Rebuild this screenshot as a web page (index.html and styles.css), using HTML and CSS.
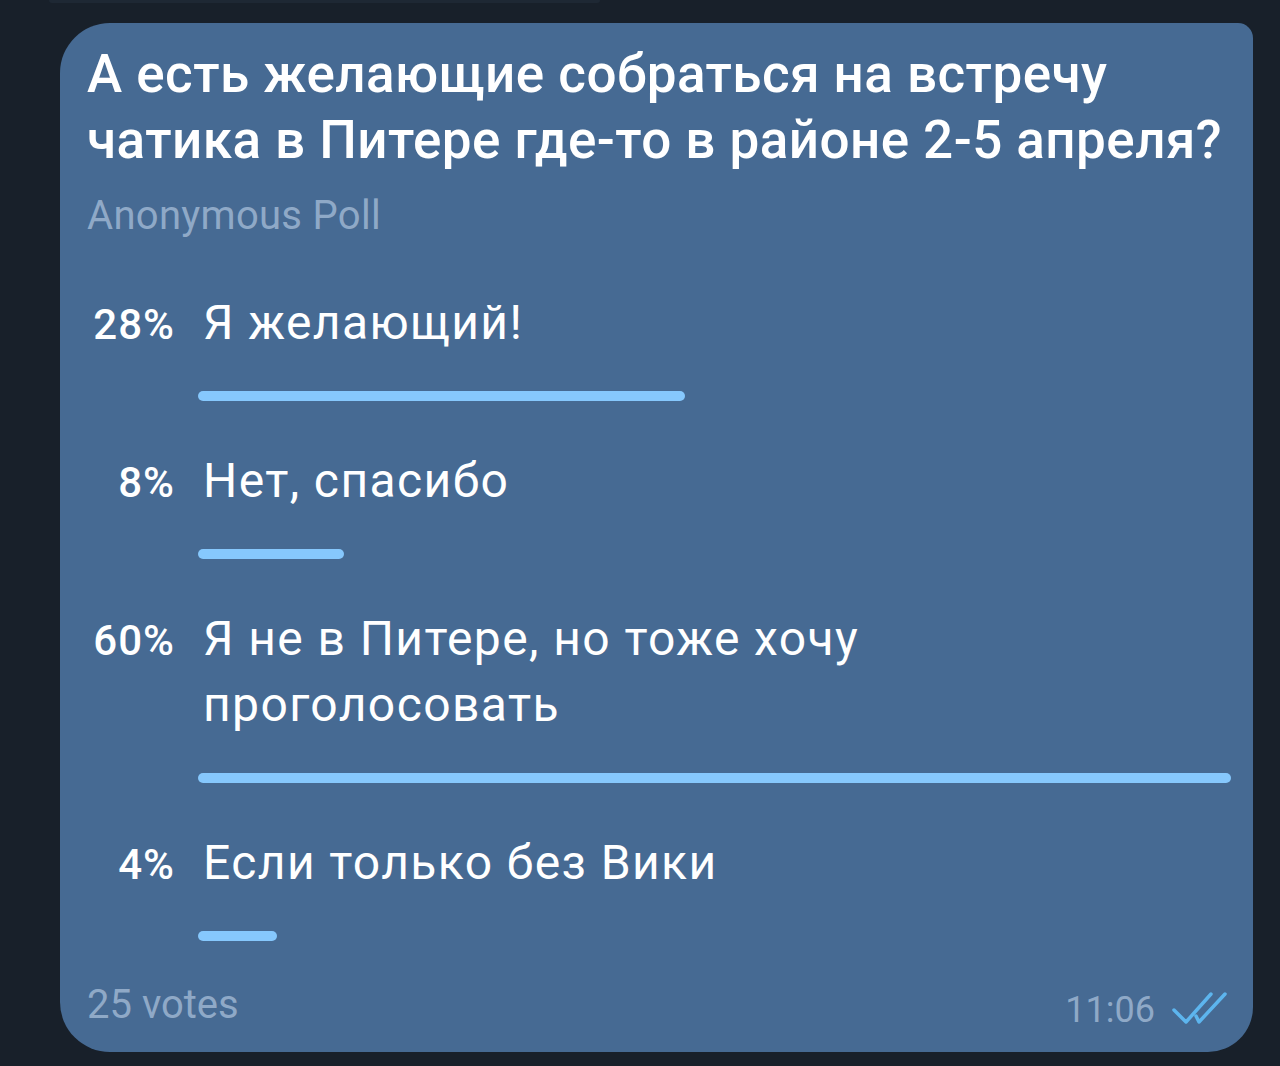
FILE: index.html
```html
<!DOCTYPE html>
<html lang="ru">
<head>
  <meta charset="UTF-8">
  <title>Опрос</title>
  <link rel="stylesheet" href="styles.css">
</head>
<body>

  <div class="prev-msg"></div>

  <div class="bubble">
    <div class="question">А есть желающие собраться на встречу чатика в Питере где-то в районе 2-5 апреля?</div>
    <div class="poll-type">Anonymous Poll</div>

    <div class="answers">
      <div class="answer">
        <div class="pct">28%</div>
        <div class="body">
          <div class="label">Я желающий!</div>
          <div class="bar" style="width: 47.1%"></div>
        </div>
      </div>
      <div class="answer">
        <div class="pct">8%</div>
        <div class="body">
          <div class="label">Нет, спасибо</div>
          <div class="bar" style="width: 14.1%"></div>
        </div>
      </div>
      <div class="answer">
        <div class="pct">60%</div>
        <div class="body">
          <div class="label">Я не в Питере, но тоже хочу проголосовать</div>
          <div class="bar" style="width: 100%"></div>
        </div>
      </div>
      <div class="answer">
        <div class="pct">4%</div>
        <div class="body">
          <div class="label">Если только без Вики</div>
          <div class="bar" style="width: 7.6%"></div>
        </div>
      </div>
    </div>

    <div class="footer">
      <div class="votes">25 votes</div>
      <div class="meta">
        <span class="time">11:06</span>
        <svg class="ticks" width="56" height="32" viewBox="0 0 56 32">
          <path d="M2 18 L14 30 L39 2" />
          <path d="M24 24 L27 30 L53 2" />
        </svg>
      </div>
    </div>
  </div>

</body>
</html>
```

FILE: styles.css
```css
html, body {
  margin: 0;
  padding: 0;
  background: #18202a;
  font-family: Roboto, "Noto Sans", sans-serif;
  color: #fff;
}

.prev-msg {
  width: 551px;
  height: 3px;
  margin-left: 49px;
  background: #1e2834;
  border-radius: 0 0 14px 14px;
}

.bubble {
  width: 1193px;
  height: 1029px;
  box-sizing: border-box;
  margin: 20px 0 0 60px;
  padding: 18px 22px 22px 27px;
  background: #466a93;
  border-radius: 50px 15px 45px 50px;
  display: flex;
  flex-direction: column;
}

.question {
  font-size: 53px;
  font-weight: 500;
  line-height: 66px;
  letter-spacing: 0.45px;
}

.poll-type {
  margin-top: 18px;
  font-size: 40px;
  line-height: 50px;
  letter-spacing: 0.3px;
  color: #8fa9c7;
}

.answers {
  margin-top: 49px;
  display: flex;
  flex-direction: column;
  gap: 47px;
}

.answer {
  display: grid;
  grid-template-columns: 87px 1fr;
  column-gap: 24px;
  align-items: baseline;
}

.pct {
  text-align: right;
  font-size: 42px;
  font-weight: 500;
  line-height: 66px;
  letter-spacing: 1px;
  margin-right: -1px;
}

.label {
  padding: 0 60px 0 5px;
  font-size: 48px;
  line-height: 66px;
  letter-spacing: 1.4px;
}

.bar {
  margin-top: 35px;
  height: 10px;
  border-radius: 5px;
  background: #86c8fd;
}

.footer {
  margin-top: auto;
  display: flex;
  justify-content: space-between;
  align-items: flex-end;
  color: #8fa9c7;
}

.votes {
  font-size: 40px;
  line-height: 50px;
}

.meta {
  display: flex;
  align-items: flex-end;
  gap: 17px;
  margin-right: 3px;
}

.time {
  font-size: 36px;
  line-height: 40px;
}

.ticks {
  margin-bottom: 6px;
}

.ticks path {
  fill: none;
  stroke: #5db5ee;
  stroke-width: 3.5;
  stroke-linecap: round;
  stroke-linejoin: round;
}
```
